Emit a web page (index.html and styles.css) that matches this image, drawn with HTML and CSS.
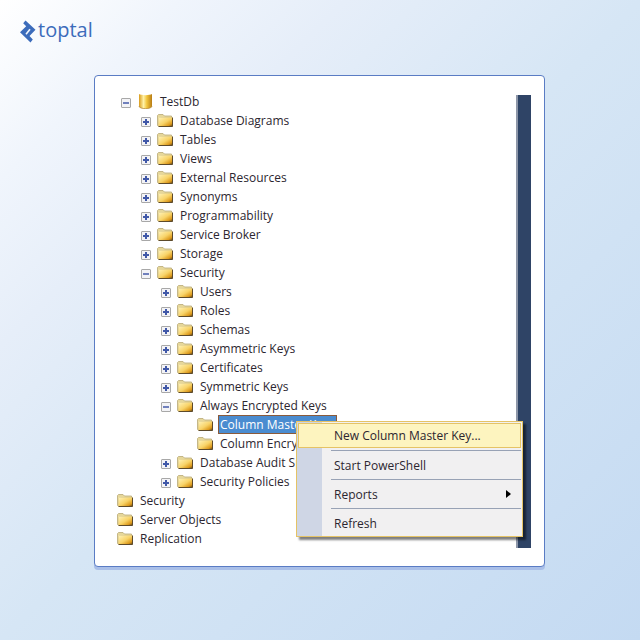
FILE: index.html
```html
<!DOCTYPE html>
<html lang="en">
<head>
<meta charset="utf-8">
<title>Toptal</title>
<link rel="stylesheet" href="styles.css">
</head>
<body>
<svg class="defs" aria-hidden="true">
  <defs>
    <linearGradient id="gold" x1="0" y1="0" x2="1" y2="1">
      <stop offset="0" stop-color="#fff3b8"/>
      <stop offset=".5" stop-color="#f8d368"/>
      <stop offset=".8" stop-color="#dd9a1c"/>
      <stop offset="1" stop-color="#4d3a1c"/>
    </linearGradient>
    <linearGradient id="drum" x1="0" y1="0" x2="1" y2="0">
      <stop offset="0" stop-color="#d99b1c"/>
      <stop offset=".35" stop-color="#fff2a8"/>
      <stop offset=".6" stop-color="#f2c53c"/>
      <stop offset="1" stop-color="#b87c14"/>
    </linearGradient>
    <symbol id="folder" viewBox="0 0 16 13">
      <path d="M.5 11.5V1.500L1.500.5H6L7.500 2H14.500V4H2V12Z" fill="#e6d79a" stroke="#b9a976" stroke-width=".8"/>
      <path d="M1.500 3.500H15.500V12.500H1.500Z" fill="url(#gold)"/>
      <path d="M1.500 12.500H15.500V3.500" fill="none" stroke="#5d4a2b" stroke-width="1"/>
    </symbol>
    <symbol id="database" viewBox="0 0 16 15">
      <path d="M2 0V12C2 15.500 15 15.500 15 12V0C13 1.500 4 1.500 2 0Z" fill="url(#drum)"/>
      <path d="M2 12C2 15.500 15 15.500 15 12" fill="none" stroke="#b58a3a" stroke-width=".8"/>
    </symbol>
  </defs>
</svg>
<header class="header">
  <a class="logo" href="#">
    <svg class="logo-mark" viewBox="0 0 16 23" aria-hidden="true">
      <path d="M5.500.5L15.500 9.800L9.500 16L12.800 19.500L10.500 22.500L0 12.200L6.200 6.300L3.200 3.200Z" fill="#3c6cbb"/>
      <path d="M6 14.200L10 9.200" fill="none" stroke="#f4f8fd" stroke-width="1.600"/>
    </svg>
    <span>toptal</span>
  </a>
</header>
<main class="card">
  <ul class="tree">
    <li>
      <ul>
        <li>
          <div class="row"><button class="toggle open" aria-label="Collapse TestDb"></button><svg class="icon-db"><use href="#database"/></svg><span class="label">TestDb</span></div>
          <ul>
            <li class="row"><button class="toggle" aria-label="Expand Database Diagrams"></button><svg class="icon"><use href="#folder"/></svg><span class="label">Database Diagrams</span></li>
            <li class="row"><button class="toggle" aria-label="Expand Tables"></button><svg class="icon"><use href="#folder"/></svg><span class="label">Tables</span></li>
            <li class="row"><button class="toggle" aria-label="Expand Views"></button><svg class="icon"><use href="#folder"/></svg><span class="label">Views</span></li>
            <li class="row"><button class="toggle" aria-label="Expand External Resources"></button><svg class="icon"><use href="#folder"/></svg><span class="label">External Resources</span></li>
            <li class="row"><button class="toggle" aria-label="Expand Synonyms"></button><svg class="icon"><use href="#folder"/></svg><span class="label">Synonyms</span></li>
            <li class="row"><button class="toggle" aria-label="Expand Programmability"></button><svg class="icon"><use href="#folder"/></svg><span class="label">Programmability</span></li>
            <li class="row"><button class="toggle" aria-label="Expand Service Broker"></button><svg class="icon"><use href="#folder"/></svg><span class="label">Service Broker</span></li>
            <li class="row"><button class="toggle" aria-label="Expand Storage"></button><svg class="icon"><use href="#folder"/></svg><span class="label">Storage</span></li>
            <li>
              <div class="row"><button class="toggle open" aria-label="Collapse Security"></button><svg class="icon"><use href="#folder"/></svg><span class="label">Security</span></div>
              <ul>
                <li class="row"><button class="toggle" aria-label="Expand Users"></button><svg class="icon"><use href="#folder"/></svg><span class="label">Users</span></li>
                <li class="row"><button class="toggle" aria-label="Expand Roles"></button><svg class="icon"><use href="#folder"/></svg><span class="label">Roles</span></li>
                <li class="row"><button class="toggle" aria-label="Expand Schemas"></button><svg class="icon"><use href="#folder"/></svg><span class="label">Schemas</span></li>
                <li class="row"><button class="toggle" aria-label="Expand Asymmetric Keys"></button><svg class="icon"><use href="#folder"/></svg><span class="label">Asymmetric Keys</span></li>
                <li class="row"><button class="toggle" aria-label="Expand Certificates"></button><svg class="icon"><use href="#folder"/></svg><span class="label">Certificates</span></li>
                <li class="row"><button class="toggle" aria-label="Expand Symmetric Keys"></button><svg class="icon"><use href="#folder"/></svg><span class="label">Symmetric Keys</span></li>
                <li>
                  <div class="row"><button class="toggle open" aria-label="Collapse Always Encrypted Keys"></button><svg class="icon"><use href="#folder"/></svg><span class="label">Always Encrypted Keys</span></div>
                  <ul>
                    <li class="row leaf has-menu"><svg class="icon"><use href="#folder"/></svg><span class="label selected">Column Master Keys</span>
                      <div class="menu">
                        <button class="menu-item active">New Column Master Key...</button>
                        <hr>
                        <button class="menu-item">Start PowerShell</button>
                        <hr>
                        <button class="menu-item">Reports<svg class="arrow" viewBox="0 0 5 8" aria-hidden="true"><path d="M0 0L5 4L0 8Z"/></svg></button>
                        <hr>
                        <button class="menu-item">Refresh</button>
                      </div>
                    </li>
                    <li class="row leaf"><svg class="icon"><use href="#folder"/></svg><span class="label">Column Encry</span></li>
                  </ul>
                </li>
                <li class="row"><button class="toggle" aria-label="Expand Database Audit Sp"></button><svg class="icon"><use href="#folder"/></svg><span class="label">Database Audit Sp</span></li>
                <li class="row"><button class="toggle" aria-label="Expand Security Policies"></button><svg class="icon"><use href="#folder"/></svg><span class="label">Security Policies</span></li>
              </ul>
            </li>
          </ul>
        </li>
      </ul>
    </li>
    <li class="row leaf"><svg class="icon"><use href="#folder"/></svg><span class="label">Security</span></li>
    <li class="row leaf"><svg class="icon"><use href="#folder"/></svg><span class="label">Server Objects</span></li>
    <li class="row leaf"><svg class="icon"><use href="#folder"/></svg><span class="label">Replication</span></li>
  </ul>
  <div class="pane-edge"></div>
</main>
</body>
</html>
```
FILE: styles.css
```css
* {
  box-sizing: border-box;
}

body {
  margin: 0;
  min-height: 100vh;
  background: linear-gradient(135deg, #ffffff 0%, #f0f5fc 14%, #e6eef9 27%, #d6e6f5 50%, #c4daf2 100%);
  font: 500 12px/19px "Open Sans", "Noto Sans", sans-serif;
  color: #2c2630;
}

.defs {
  position: absolute;
  width: 0;
  height: 0;
}

.header {
  height: 75px;
  padding: 16px 20px;
}

.logo {
  display: inline-flex;
  align-items: center;
  gap: 2px;
  color: #3c6cbb;
  font-size: 20px;
  line-height: 28px;
  text-decoration: none;
}

.logo-mark {
  width: 16px;
  height: 23px;
  margin-top: 3px;
}

.card {
  display: flex;
  justify-content: space-between;
  margin: 0 95px 70px 94px;
  padding: 16px 13px 18px 6px;
  border: 1px solid #5a7cc4;
  border-radius: 4px;
  background: #ffffff;
  box-shadow: 0 3px 0 #a9bfe8;
}

.tree,
.tree ul {
  margin: 0;
  padding: 0;
  list-style: none;
}

.tree ul {
  padding-left: 20px;
}

.row {
  display: flex;
  align-items: center;
  height: 19px;
  white-space: nowrap;
}

.leaf {
  padding-left: 16px;
}

.toggle {
  flex: none;
  width: 10px;
  height: 10px;
  margin: 2px 6px 0 0;
  padding: 0;
  border: 1px solid #a8a8a8;
  border-radius: 1px;
  background:
    linear-gradient(#4058a8, #4058a8) center / 6px 2px no-repeat,
    linear-gradient(#4058a8, #4058a8) center / 2px 6px no-repeat,
    #f3f3f6;
}

.toggle.open {
  background:
    linear-gradient(#7080bc, #7080bc) center / 6px 2px no-repeat,
    #f3f3f6;
}

.icon {
  flex: none;
  width: 16px;
  height: 13px;
}

.icon-db {
  flex: none;
  width: 16px;
  height: 15px;
}

.label {
  margin-left: 5px;
  padding: 0 2px;
}

.selected {
  height: 19px;
  line-height: 17px;
  padding: 0 1px;
  border: 1px solid #8a5a3a;
  background: #4a8cd0;
  color: #ffffff;
}

.has-menu {
  position: relative;
}

.menu {
  position: absolute;
  top: 6px;
  left: 115px;
  width: 227px;
  padding: 1px;
  border: 1px solid #e5c365;
  background: linear-gradient(90deg, #cfd6e5 25px, #f1f0f1 25px);
  box-shadow: 3px 3px 2px rgba(0, 0, 0, 0.5);
}

.menu-item {
  display: flex;
  align-items: center;
  justify-content: space-between;
  width: 100%;
  height: 24px;
  padding: 0 10px 0 36px;
  border: 0;
  background: none;
  font: inherit;
  color: inherit;
}

.menu-item.active {
  height: 25px;
  padding-left: 35px;
  border: 1px solid #e5c365;
  background: #fdf4bf;
}

.menu hr {
  height: 1px;
  margin: 2px 0 2px 33px;
  border: 0;
  background: #98a2b5;
}

.arrow {
  width: 5px;
  height: 8px;
  fill: #000000;
}

.pane-edge {
  flex: none;
  width: 15px;
  margin-top: 3px;
  border-left: 2px solid #8d96a8;
  background: #2f4466;
}
```
